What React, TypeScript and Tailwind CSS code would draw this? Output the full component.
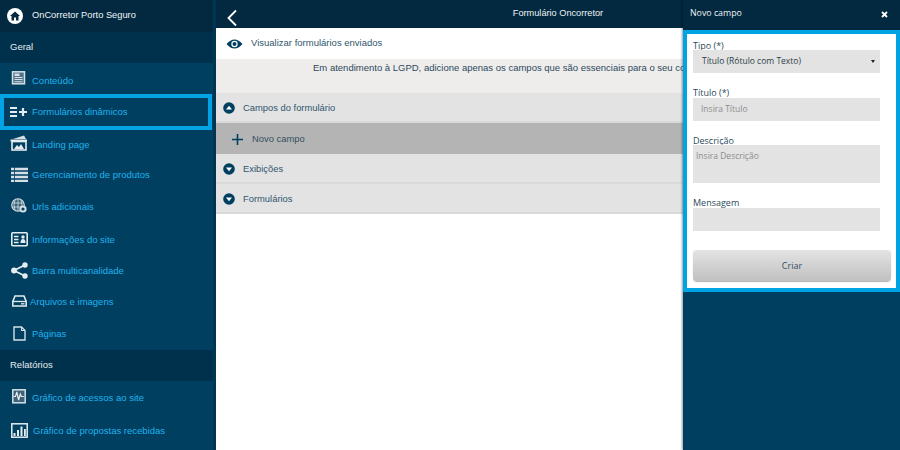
import React from "react";

const s = { fill: "none", stroke: "#d5e0e6", strokeWidth: 1.5 };
const Svg = ({ children, w = 18, h = 18 }: { children: React.ReactNode; w?: number; h?: number }) => (
  <svg width={w} height={h} viewBox={`0 0 ${w} ${h}`}>{children}</svg>
);

const Content = () => (
  <Svg>
    <rect x="2.500" y="0.800" width="12" height="12" {...s} fill="#51738a" />
    <rect x="4.500" y="2.500" width="5" height="2.500" fill="#d5e0e6" />
    <path d="M4.500 6.500h8M4.500 8.500h8M4.500 10.700h8" stroke="#d5e0e6" strokeWidth="1.100" />
  </Svg>
);
const FormPlus = () => (
  <Svg>
    <path d="M0 5h7M0 9h7M0 13h7" stroke="#e6edf0" strokeWidth="1.800" />
    <path d="M9 9h8M13 5v8" stroke="#e6edf0" strokeWidth="2.200" />
  </Svg>
);
const Landing = () => (
  <svg width="18" height="16" viewBox="0 0 18 16" className="mb-[2px]">
    <path d="M3 4 L14 0.500 L16 4Z" fill="#d5e0e6" />
    <path d="M0.500 4.500h16.500v2H0.500z" fill="#e6edf0" />
    <rect x="2" y="6.500" width="14" height="8.500" fill="none" stroke="#e6edf0" strokeWidth="1.600" />
    <path d="M4 14l3-4 2 2 2-3 3 5" fill="#e6edf0" />
  </svg>
);
const ListIcon = () => (
  <Svg w={17} h={15}>
    <path d="M0 2h17M0 6h17M0 10h17M0 14h17" stroke="#d5e0e6" strokeWidth="2.400" />
    <path d="M3.500 0v15" stroke="#003f5f" strokeWidth="0.800" />
  </Svg>
);
const Globe = () => (
  <svg width="16" height="15" viewBox="0 0 16 15" className="mb-[3px]">
    <circle cx="7" cy="7" r="6.300" fill="#3b6279" stroke="#d5e0e6" strokeWidth="1.100" />
    <path d="M1 5h12M1 9h12M7 1v12M4 2q-2 5 0 10M10 2q2 5 0 10" fill="none" stroke="#d5e0e6" strokeWidth="0.800" />
    <circle cx="12" cy="11" r="3.600" fill="#d5e0e6" />
    <circle cx="12" cy="11" r="1.600" fill="#003f5f" />
  </svg>
);
const Info = () => (
  <Svg w={17} h={15}>
    <rect x="0.800" y="0.800" width="15.400" height="13" rx="1" fill="none" stroke="#e6edf0" strokeWidth="1.600" />
    <path d="M3 4.500h4.500M3 7.500h4.500M3 10.500h4.500" stroke="#e6edf0" strokeWidth="1.300" />
    <circle cx="12" cy="5" r="1.700" fill="#e6edf0" />
    <path d="M9.500 11q0-4 2.500-4t2.500 4z" fill="#e6edf0" />
  </Svg>
);
const Share = () => (
  <Svg w={17} h={17}>
    <path d="M14 3L3 8.500 14 14" fill="none" stroke="#e6edf0" strokeWidth="1.800" />
    <circle cx="14" cy="3" r="2.700" fill="#e6edf0" />
    <circle cx="3" cy="8.500" r="2.900" fill="#e6edf0" />
    <circle cx="14" cy="14" r="2.700" fill="#e6edf0" />
  </Svg>
);
const Drive = () => (
  <Svg w={15} h={12}>
    <path d="M3 1h9l2.200 5.500V11H0.800V6.500z" fill="none" stroke="#e6edf0" strokeWidth="1.500" />
    <path d="M1 6.500h13" stroke="#e6edf0" strokeWidth="1.300" />
    <path d="M9 8.800h3.500" stroke="#e6edf0" strokeWidth="1.300" />
  </Svg>
);
const Page = () => (
  <Svg w={13} h={15}>
    <path d="M1 1h7.500L12 4.500V14H1z" fill="none" stroke="#d5e0e6" strokeWidth="1.400" />
    <path d="M8.500 1v3.500H12" fill="none" stroke="#d5e0e6" strokeWidth="1.100" />
  </Svg>
);
const Access = () => (
  <svg width="14" height="15" viewBox="0 0 14 15" className="mb-[2px]">
    <rect x="0.800" y="0.800" width="12.400" height="13" fill="#3b6279" stroke="#d5e0e6" strokeWidth="1.500" />
    <path d="M1.500 7.500h2l1.300-4.500 1.800 8 1.700-6 1 2.500h2.500" fill="none" stroke="#e6edf0" strokeWidth="1.200" />
  </svg>
);
const Bars = () => (
  <Svg w={17} h={15}>
    <rect x="0.800" y="0.800" width="15.400" height="13.400" fill="none" stroke="#e6edf0" strokeWidth="1.500" />
    <path d="M2.500 13h2v-3h-2zM6 13h2V7H6zM9.500 13h2V3.500h-2zM13 13h1.800V6H13z" fill="#e6edf0" />
  </Svg>
);

const Item = ({
  icon,
  label,
  h,
  gap,
  extra = "",
  active,
}: {
  icon: React.ReactNode;
  label: string;
  h: string;
  gap: string;
  extra?: string;
  active?: boolean;
}) => (
  <div
    className={`flex shrink-0 items-center ${h} ${gap} ${extra} text-[9.500px] text-[#20b2ee] ${
      active ? "w-[212px] border-[4px] border-[#00a4e4] pl-[6px]" : "pl-[10px]"
    }`}
  >
    <span className="flex w-[18px] shrink-0 justify-center">{icon}</span>
    <span className={`whitespace-nowrap ${active ? "" : "mt-[2px]"}`}>{label}</span>
  </div>
);

const Section = ({ label, h }: { label: string; h: string }) => (
  <div className={`flex shrink-0 items-center ${h} bg-[#00314c] pl-[10px] text-[9.500px] text-[#e4ebee]`}>{label}</div>
);

const Chevron = ({ up }: { up?: boolean }) => (
  <svg width="12" height="12" viewBox="0 0 12 12" className="shrink-0">
    <circle cx="6" cy="6" r="5.800" fill="#003f5f" />
    <path d={up ? "M6 3.800L9 7.500H3z" : "M6 8.200L3 4.500h6z"} fill="#ffffff" />
  </svg>
);

const Row = ({ label, up }: { label: string; up?: boolean }) => (
  <div className="flex h-[30px] items-center gap-[8px] border-b-2 border-[#d9d9d9] bg-[#e3e3e3] pl-[7px] pt-[2px] text-[9.400px] text-[#2f566e]">
    <Chevron up={up} />
    <span>{label}</span>
  </div>
);

const labelCls = "block text-[9px] leading-[10px] text-[#2c4a5a]";
const fieldCls = "w-[187px] bg-[#e3e3e3] text-[8.500px]";

export default function App() {
  return (
    <div
      className="relative flex h-[450px] w-[900px] overflow-hidden bg-white"
      style={{ fontFamily: '"Liberation Sans", Arial, sans-serif' }}
    >
      <aside className="flex h-full w-[216px] shrink-0 flex-col border-r-[3px] border-[#003553] bg-[#003f5f]">
        <div className="flex h-[32px] shrink-0 items-center gap-[9px] bg-[#02293f] pl-[7px] text-[9.300px] text-[#f0f4f6]">
          <svg width="16" height="16" viewBox="0 0 16 16">
            <circle cx="8" cy="8" r="8" fill="#ffffff" />
            <path d="M8 3.500L3 8h1.500v4.500h2.500V9.500h2v3h2.500V8H13z" fill="#02293f" />
          </svg>
          <span>OnCorretor Porto Seguro</span>
        </div>
        <Section label="Geral" h="h-[31px]" />
        <Item icon={<Content />} label="Conteúdo" h="h-[31px]" gap="gap-[4px]" extra="pt-[3px]" />
        <Item icon={<FormPlus />} label="Formulários dinâmicos" h="h-[36px]" gap="gap-[4px]" active />
        <Item icon={<Landing />} label="Landing page" h="h-[28px]" gap="gap-[4px]" />
        <Item icon={<ListIcon />} label="Gerenciamento de produtos" h="h-[33px]" gap="gap-[4px]" />
        <Item icon={<Globe />} label="Urls adicionais" h="h-[31px]" gap="gap-[4px]" />
        <Item icon={<Info />} label="Informações do site" h="h-[34px]" gap="gap-[4px]" />
        <Item icon={<Share />} label="Barra multicanalidade" h="h-[29px]" gap="gap-[4px]" />
        <Item icon={<Drive />} label="Arquivos e imagens" h="h-[32px]" gap="gap-[2px]" />
        <Item icon={<Page />} label="Páginas" h="h-[33px]" gap="gap-[4px]" />
        <Section label="Relatórios" h="h-[31px]" />
        <Item icon={<Access />} label="Gráfico de acessos ao site" h="h-[32px]" gap="gap-[4px]" />
        <Item icon={<Bars />} label="Gráfico de propostas recebidas" h="h-[34px]" gap="gap-[5px]" />
      </aside>

      <main className="flex min-w-0 flex-1 flex-col">
        <div className="relative flex h-[28px] shrink-0 items-center justify-center bg-[#02293f] text-[9.200px] text-[#edf2f4]">
          <svg width="12" height="18" viewBox="0 0 12 18" className="absolute left-[10px] top-[9px]">
            <path d="M10 1.500L2.500 9l7.500 7.500" fill="none" stroke="#ffffff" strokeWidth="1.800" />
          </svg>
          <span>Formulário Oncorretor</span>
        </div>
        <div className="flex h-[31px] shrink-0 items-center gap-[8px] pl-[10px] text-[9.500px] text-[#2f566e]">
          <svg width="17" height="12" viewBox="0 0 17 12">
            <path d="M0.500 6Q8.500-3 16.500 6Q8.500 15 0.500 6z" fill="#003f5f" />
            <circle cx="8.500" cy="6" r="3.200" fill="#ffffff" />
            <circle cx="8.500" cy="6" r="2" fill="#003f5f" />
          </svg>
          <span>Visualizar formulários enviados</span>
        </div>
        <div className="h-[34px] w-[467px] shrink-0 overflow-hidden whitespace-nowrap bg-[#efecec] pl-[97px] pt-[2px] text-[9.500px] leading-[14px] text-[#2b4a5c]">
          Em atendimento à LGPD, adicione apenas os campos que são essenciais para o seu correto funcionamento do site.
        </div>
        <Row label="Campos do formulário" up />
        <div className="flex h-[31px] items-center gap-[9px] bg-[#b4b4b4] pl-[16px] pt-[1px] text-[9.400px] text-[#33505f]">
          <svg width="11" height="11" viewBox="0 0 11 11">
            <path d="M0 5.500h11M5.500 0v11" stroke="#003f5f" strokeWidth="1.600" />
          </svg>
          <span>Novo campo</span>
        </div>
        <Row label="Exibições" />
        <Row label="Formulários" />
      </main>

      <div
        className="absolute right-0 top-0 flex h-full w-[217px] flex-col bg-[#003f5f] shadow-[-1px_0_2px_rgba(0,0,0,0.4)]"
        style={{ fontFamily: '"Open Sans", Arial, sans-serif' }}
      >
        <div className="flex h-[30px] shrink-0 items-center justify-between bg-[#02293f] pb-[2px] pl-[7px] pr-[12px] text-[8.800px] text-[#eef2f4]">
          <span>Novo campo</span>
          <svg width="7" height="7" viewBox="0 0 7 7">
            <path d="M1 1l5 5M6 1l-5 5" stroke="#ffffff" strokeWidth="1.800" />
          </svg>
        </div>
        <div className="flex h-[262px] shrink-0 flex-col border-[4px] border-[#00a4e4] bg-white pl-[6px] pt-[7px]">
          <label className={labelCls}>Tipo (*)</label>
          <div className={`${fieldCls} -mt-[1px] flex h-[23px] shrink-0 items-center justify-between pl-[9px] pr-[5px] text-[#2c3e48]`}>
            <span>Título (Rótulo com Texto)</span>
            <span className="h-0 w-0 border-x-[2.500px] border-t-[3px] border-x-transparent border-t-[#222]" />
          </div>
          <label className={`${labelCls} mt-[15px]`}>Título (*)</label>
          <div className={`${fieldCls} flex h-[23px] shrink-0 items-center pl-[8px] text-[#8d8d8d]`}>Insira Título</div>
          <label className={`${labelCls} mt-[15px]`}>Descrição</label>
          <div className={`${fieldCls} -mt-[1px] h-[38px] shrink-0 pl-[3px] pt-[5px] leading-[12px] text-[#8d8d8d]`}>Insira Descrição</div>
          <label className={`${labelCls} mt-[15px]`}>Mensagem</label>
          <div className={`${fieldCls} h-[23px] shrink-0`} />
          <button className="mt-[19px] flex h-[31px] w-[198px] shrink-0 items-center justify-center rounded-[4px] bg-gradient-to-b from-[#e4e4e4] to-[#c0c0c0] text-[9px] text-[#33505f] shadow-[0_1px_1px_rgba(0,0,0,0.3)]">
            Criar
          </button>
        </div>
      </div>
    </div>
  );
}
